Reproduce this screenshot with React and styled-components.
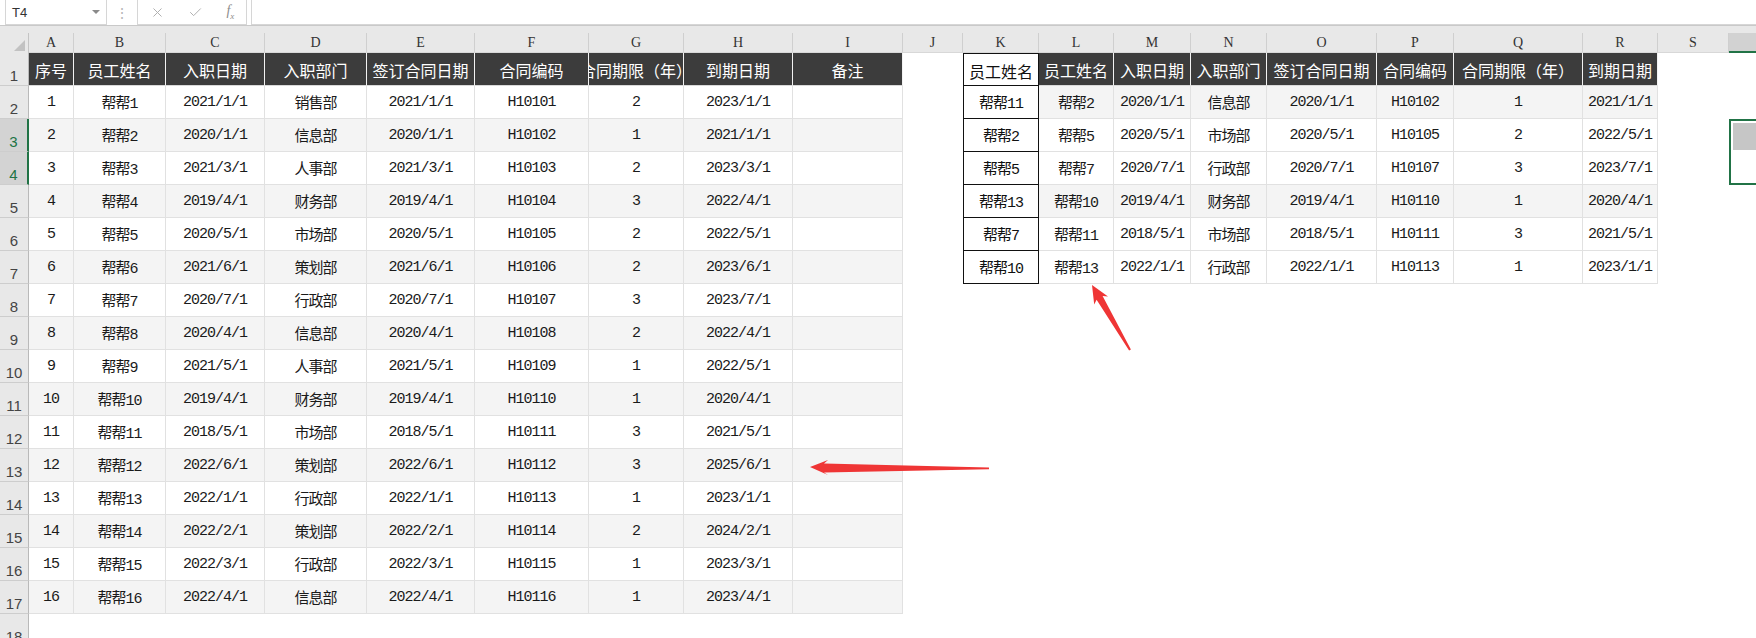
import React from "react";
import styled, { createGlobalStyle } from "styled-components";
import { X, Check } from "lucide-react";

const GlobalStyle = createGlobalStyle`
  html, body {
    margin: 0;
    padding: 0;
    background: #ffffff;
    overflow: hidden;
  }
  body {
    font-family: "Liberation Sans", "Noto Sans CJK SC", sans-serif;
  }
`;

const cols = [
  { k: "A", w: 45 },
  { k: "B", w: 92 },
  { k: "C", w: 99 },
  { k: "D", w: 102 },
  { k: "E", w: 108 },
  { k: "F", w: 114 },
  { k: "G", w: 95 },
  { k: "H", w: 109 },
  { k: "I", w: 110 },
  { k: "J", w: 60 },
  { k: "K", w: 76 },
  { k: "L", w: 75 },
  { k: "M", w: 77 },
  { k: "N", w: 76 },
  { k: "O", w: 110 },
  { k: "P", w: 77 },
  { k: "Q", w: 129 },
  { k: "R", w: 75 },
  { k: "S", w: 71 },
  { k: "T", w: 76 },
];

const headers = ["序号", "员工姓名", "入职日期", "入职部门", "签订合同日期", "合同编码", "合同期限（年）", "到期日期", "备注"];
const rightHeaders = ["员工姓名", "入职日期", "入职部门", "签订合同日期", "合同编码", "合同期限（年）", "到期日期"];

const staff = [
  ["1", "帮帮1", "2021/1/1", "销售部", "2021/1/1", "H10101", "2", "2023/1/1", ""],
  ["2", "帮帮2", "2020/1/1", "信息部", "2020/1/1", "H10102", "1", "2021/1/1", ""],
  ["3", "帮帮3", "2021/3/1", "人事部", "2021/3/1", "H10103", "2", "2023/3/1", ""],
  ["4", "帮帮4", "2019/4/1", "财务部", "2019/4/1", "H10104", "3", "2022/4/1", ""],
  ["5", "帮帮5", "2020/5/1", "市场部", "2020/5/1", "H10105", "2", "2022/5/1", ""],
  ["6", "帮帮6", "2021/6/1", "策划部", "2021/6/1", "H10106", "2", "2023/6/1", ""],
  ["7", "帮帮7", "2020/7/1", "行政部", "2020/7/1", "H10107", "3", "2023/7/1", ""],
  ["8", "帮帮8", "2020/4/1", "信息部", "2020/4/1", "H10108", "2", "2022/4/1", ""],
  ["9", "帮帮9", "2021/5/1", "人事部", "2021/5/1", "H10109", "1", "2022/5/1", ""],
  ["10", "帮帮10", "2019/4/1", "财务部", "2019/4/1", "H10110", "1", "2020/4/1", ""],
  ["11", "帮帮11", "2018/5/1", "市场部", "2018/5/1", "H10111", "3", "2021/5/1", ""],
  ["12", "帮帮12", "2022/6/1", "策划部", "2022/6/1", "H10112", "3", "2025/6/1", ""],
  ["13", "帮帮13", "2022/1/1", "行政部", "2022/1/1", "H10113", "1", "2023/1/1", ""],
  ["14", "帮帮14", "2022/2/1", "策划部", "2022/2/1", "H10114", "2", "2024/2/1", ""],
  ["15", "帮帮15", "2022/3/1", "行政部", "2022/3/1", "H10115", "1", "2023/3/1", ""],
  ["16", "帮帮16", "2022/4/1", "信息部", "2022/4/1", "H10116", "1", "2023/4/1", ""],
];

const lookupNames = ["帮帮11", "帮帮2", "帮帮5", "帮帮13", "帮帮7", "帮帮10"];

const found = [
  { alt: true, v: ["帮帮2", "2020/1/1", "信息部", "2020/1/1", "H10102", "1", "2021/1/1"] },
  { alt: false, v: ["帮帮5", "2020/5/1", "市场部", "2020/5/1", "H10105", "2", "2022/5/1"] },
  { alt: false, v: ["帮帮7", "2020/7/1", "行政部", "2020/7/1", "H10107", "3", "2023/7/1"] },
  { alt: true, v: ["帮帮10", "2019/4/1", "财务部", "2019/4/1", "H10110", "1", "2020/4/1"] },
  { alt: false, v: ["帮帮11", "2018/5/1", "市场部", "2018/5/1", "H10111", "3", "2021/5/1"] },
  { alt: false, v: ["帮帮13", "2022/1/1", "行政部", "2022/1/1", "H10113", "1", "2023/1/1"] },
];

const Page = styled.div`
  position: relative;
  width: 1756px;
  height: 638px;
  overflow: hidden;
  background: #fff;
`;

/* formula bar */
const Toolbar = styled.div`
  display: flex;
  align-items: stretch;
  height: 25px;
  border-bottom: 1px solid #c9c9c9;
  background: #fff;
`;

const NameBox = styled.div`
  display: flex;
  align-items: center;
  justify-content: space-between;
  width: 102px;
  margin-left: 5px;
  padding: 0 6px 0 6px;
  box-sizing: border-box;
  border: 1px solid #d6d6d6;
  border-top: none;
  font-size: 13px;
  color: #333;
`;

const Caret = styled.span`
  width: 0;
  height: 0;
  border-left: 4px solid transparent;
  border-right: 4px solid transparent;
  border-top: 4px solid #8a8a8a;
`;

const Dots = styled.div`
  width: 30px;
  display: flex;
  align-items: center;
  justify-content: center;
  color: #b5b5b5;
  font-size: 14px;
`;

const FxBox = styled.div`
  display: flex;
  align-items: center;
  justify-content: space-around;
  width: 110px;
  box-sizing: border-box;
  border: 1px solid #d6d6d6;
  border-top: none;
  color: #b0b0b0;
`;

const FxText = styled.span`
  font-family: "Liberation Serif", serif;
  font-style: italic;
  font-size: 14px;
  color: #8c8c8c;
  sub {
    font-size: 9px;
  }
`;

const FormulaInput = styled.div`
  flex: 1;
  margin-left: 4px;
  border: 1px solid #d6d6d6;
  border-top: none;
  border-right: none;
`;

const Band = styled.div`
  height: 7px;
  background: #e8e8e8;
`;

/* sheet */
const Row = styled.div`
  display: flex;
  height: ${(p) => p.$h}px;
`;

const Corner = styled.div`
  position: relative;
  flex: 0 0 29px;
  background: #e8e8e8;
  border-right: 1px solid #c4c4c4;
  box-sizing: border-box;
  &::after {
    content: "";
    position: absolute;
    right: 3px;
    bottom: 2px;
    border-left: 11px solid transparent;
    border-bottom: 11px solid #c2c2c2;
  }
`;

const ColHead = styled.div`
  flex: 0 0 ${(p) => p.$w}px;
  box-sizing: border-box;
  display: flex;
  align-items: flex-end;
  justify-content: center;
  padding-bottom: 1px;
  background: ${(p) => (p.$active ? "#d2d2d2" : "#e8e8e8")};
  border-right: 1px solid #cfcfcf;
  border-bottom: ${(p) => (p.$active ? "2px solid #217346" : "1px solid #d8d8d8")};
  font-family: "Liberation Serif", serif;
  font-size: 14px;
  color: #333;
`;

const RowHead = styled.div`
  flex: 0 0 29px;
  box-sizing: border-box;
  display: flex;
  align-items: flex-end;
  justify-content: center;
  padding-bottom: 1px;
  background: ${(p) => (p.$active ? "#d3d3d3" : "#e8e8e8")};
  border-bottom: 1px solid #cdcdcd;
  border-right: ${(p) => (p.$active ? "2px solid #217346" : "1px solid #b9b9b9")};
  font-size: 15px;
  color: ${(p) => (p.$active ? "#217346" : "#444")};
`;

const Cell = styled.div`
  flex: 0 0 ${(p) => p.$w}px;
  box-sizing: border-box;
  display: flex;
  align-items: center;
  justify-content: center;
  overflow: hidden;
  white-space: nowrap;
`;

const HeadCell = styled(Cell)`
  background: #3c3c3c;
  color: #fff;
  border-right: 1px solid #f2f2f2;
  border-bottom: 1px solid #d9d9d9;
  font-family: "Noto Sans CJK SC", sans-serif;
  font-size: 16px;
  padding-top: 2px;
`;

const DataCell = styled(Cell)`
  background: ${(p) => (p.$alt ? "#f4f4f4" : "#fff")};
  border-right: 1px solid #e1e1e1;
  border-bottom: 1px solid #e1e1e1;
  font-family: "Liberation Mono", "Noto Sans CJK SC", monospace;
  font-size: 15px;
  letter-spacing: -1px;
  color: #1a1a1a;
`;

const KeyCell = styled(Cell)`
  background: #fff;
  border: 1px solid #111;
  border-top: ${(p) => (p.$top ? "1px solid #111" : "none")};
  font-family: ${(p) => (p.$top ? '"Noto Sans CJK SC", sans-serif' : '"Liberation Mono", "Noto Sans CJK SC", monospace')};
  font-size: ${(p) => (p.$top ? 16 : 15)}px;
  letter-spacing: ${(p) => (p.$top ? 0 : -1)}px;
  padding-top: ${(p) => (p.$top ? 2 : 0)}px;
  color: #111;
`;

const BlankCell = styled(Cell)`
  background: #fff;
`;

const SelCell = styled(Cell)`
  background: ${(p) => (p.$fill ? "#c6c6c6" : "#fff")};
  border-left: 2px solid #217346;
  border-top: ${(p) => (p.$first ? "2px solid #217346" : "none")};
  border-bottom: ${(p) => (p.$last ? "2px solid #217346" : "none")};
  box-shadow: ${(p) => (p.$fill ? "inset 0 0 0 2px #fff" : "none")};
`;

const Overlay = styled.svg`
  position: absolute;
  left: 0;
  top: 0;
  pointer-events: none;
`;

function renderCell(r, c, i) {
  const w = c.w;
  const key = c.k;
  const li = i; // index into left table A..I
  if (r === 1) {
    if (li <= 8) return <HeadCell key={key} $w={w}>{headers[li]}</HeadCell>;
    if (key === "K") return <KeyCell key={key} $w={w} $top>员工姓名</KeyCell>;
    if (li >= 11 && li <= 17) return <HeadCell key={key} $w={w}>{rightHeaders[li - 11]}</HeadCell>;
    return <BlankCell key={key} $w={w} />;
  }
  if (r >= 2 && r <= 17 && li <= 8) {
    return (
      <DataCell key={key} $w={w} $alt={r % 2 === 1}>
        {staff[r - 2][li]}
      </DataCell>
    );
  }
  if (r >= 2 && r <= 7) {
    if (key === "K") return <KeyCell key={key} $w={w}>{lookupNames[r - 2]}</KeyCell>;
    if (li >= 11 && li <= 17) {
      const f = found[r - 2];
      return (
        <DataCell key={key} $w={w} $alt={f.alt}>
          {f.v[li - 11]}
        </DataCell>
      );
    }
  }
  if (key === "T" && (r === 3 || r === 4)) {
    return <SelCell key={key} $w={w} $fill={r === 3} $first={r === 3} $last={r === 4} />;
  }
  return <BlankCell key={key} $w={w} />;
}

export default function App() {
  const rows = Array.from({ length: 18 }, (_, i) => i + 1);
  return (
    <Page>
      <GlobalStyle />
      <Toolbar>
        <NameBox>
          <span>T4</span>
          <Caret />
        </NameBox>
        <Dots>⋮</Dots>
        <FxBox>
          <X size={15} strokeWidth={1.6} />
          <Check size={15} strokeWidth={1.6} />
          <FxText>
            f<sub>x</sub>
          </FxText>
        </FxBox>
        <FormulaInput />
      </Toolbar>
      <Band />
      <Row $h={20}>
        <Corner />
        {cols.map((c) => (
          <ColHead key={c.k} $w={c.w} $active={c.k === "T"}>
            {c.k}
          </ColHead>
        ))}
      </Row>
      {rows.map((r) => (
        <Row key={r} $h={33}>
          <RowHead $active={r === 3 || r === 4}>{r}</RowHead>
          {cols.map((c, i) => renderCell(r, c, i))}
        </Row>
      ))}
      <Overlay width="1756" height="638" viewBox="0 0 1756 638">
        <polygon
          points="810,467 828,460 824,463.5 989,467.4 989,469.2 824,472.5 828,475"
          fill="#ef3535"
        />
        <polygon
          points="1092,285 1108,296.5 1102.6,296.1 1130.9,349.5 1129.1,350.5 1096.6,299.7 1094.2,304.5"
          fill="#ef3535"
        />
      </Overlay>
    </Page>
  );
}
